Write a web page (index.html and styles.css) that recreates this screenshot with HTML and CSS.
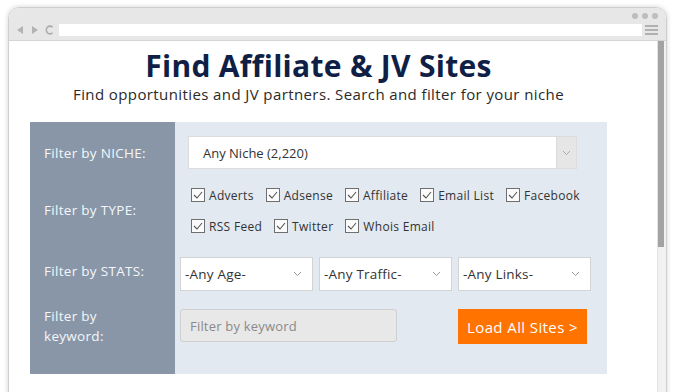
FILE: index.html
```html
<!DOCTYPE html>
<html lang="en">
<head>
    <meta charset="UTF-8">
    <meta name="viewport" content="width=device-width, initial-scale=1.0">
    <title>Find Affiliate &amp; JV Sites</title>
    <link rel="stylesheet" href="styles.css">
</head>
<body>
    <div class="browser">
        <div class="toolbar">
            <div class="dots"><span></span><span></span><span></span></div>
            <div class="nav">
                <svg class="nav-icon" width="7" height="8" viewBox="0 0 7 8"><path d="M6 0 L0 4 L6 8 Z" fill="#b3b3b3"/></svg>
                <svg class="nav-icon" width="7" height="8" viewBox="0 0 7 8"><path d="M1 0 L7 4 L1 8 Z" fill="#b3b3b3"/></svg>
                <svg class="nav-icon" width="9" height="10" viewBox="0 0 9 10"><path d="M7.6 2.2 A3.7 3.9 0 1 0 7.6 7.8" fill="none" stroke="#aaa" stroke-width="1.6"/></svg>
                <div class="address"></div>
                <div class="menu"><span></span><span></span><span></span></div>
            </div>
        </div>
        <div class="viewport">
            <div class="page">
                <h1>Find Affiliate &amp; JV Sites</h1>
                <p class="sub">Find opportunities and JV partners. Search and filter for your niche</p>

                <div class="filter">
                    <div class="label row-niche">Filter by NICHE:</div>
                    <div class="field row-niche">
                        <div class="select niche">
                            <span>Any Niche (2,220)</span>
                            <span class="niche-arrow">
                                <svg width="9" height="6" viewBox="0 0 9 6"><path d="M1 1 L4.5 4.5 L8 1" fill="none" stroke="#aaa" stroke-width="1"/></svg>
                            </span>
                        </div>
                    </div>

                    <div class="label row-type">Filter by TYPE:</div>
                    <div class="field row-type">
                        <div class="checks">
                            <label class="check"><span class="box"><svg width="10" height="8" viewBox="0 0 10 8"><path d="M1 4 L4 7 L9 1" fill="none" stroke="#555" stroke-width="1.1"/></svg></span>Adverts</label>
                            <label class="check"><span class="box"><svg width="10" height="8" viewBox="0 0 10 8"><path d="M1 4 L4 7 L9 1" fill="none" stroke="#555" stroke-width="1.1"/></svg></span>Adsense</label>
                            <label class="check"><span class="box"><svg width="10" height="8" viewBox="0 0 10 8"><path d="M1 4 L4 7 L9 1" fill="none" stroke="#555" stroke-width="1.1"/></svg></span>Affiliate</label>
                            <label class="check"><span class="box"><svg width="10" height="8" viewBox="0 0 10 8"><path d="M1 4 L4 7 L9 1" fill="none" stroke="#555" stroke-width="1.1"/></svg></span>Email List</label>
                            <label class="check"><span class="box"><svg width="10" height="8" viewBox="0 0 10 8"><path d="M1 4 L4 7 L9 1" fill="none" stroke="#555" stroke-width="1.1"/></svg></span>Facebook</label>
                            <label class="check"><span class="box"><svg width="10" height="8" viewBox="0 0 10 8"><path d="M1 4 L4 7 L9 1" fill="none" stroke="#555" stroke-width="1.1"/></svg></span>RSS Feed</label>
                            <label class="check"><span class="box"><svg width="10" height="8" viewBox="0 0 10 8"><path d="M1 4 L4 7 L9 1" fill="none" stroke="#555" stroke-width="1.1"/></svg></span>Twitter</label>
                            <label class="check"><span class="box"><svg width="10" height="8" viewBox="0 0 10 8"><path d="M1 4 L4 7 L9 1" fill="none" stroke="#555" stroke-width="1.1"/></svg></span>Whois Email</label>
                        </div>
                    </div>

                    <div class="label row-stats">Filter by STATS:</div>
                    <div class="field row-stats">
                        <div class="stats">
                            <div class="select stat"><span>-Any Age-</span><svg width="9" height="6" viewBox="0 0 9 6"><path d="M1 1 L4.5 4.5 L8 1" fill="none" stroke="#999" stroke-width="1"/></svg></div>
                            <div class="select stat"><span>-Any Traffic-</span><svg width="9" height="6" viewBox="0 0 9 6"><path d="M1 1 L4.5 4.5 L8 1" fill="none" stroke="#999" stroke-width="1"/></svg></div>
                            <div class="select stat"><span>-Any Links-</span><svg width="9" height="6" viewBox="0 0 9 6"><path d="M1 1 L4.5 4.5 L8 1" fill="none" stroke="#999" stroke-width="1"/></svg></div>
                        </div>
                    </div>

                    <div class="label row-keyword">Filter by<br>keyword:</div>
                    <div class="field row-keyword">
                        <div class="keyword-row">
                            <input type="text" class="keyword" placeholder="Filter by keyword">
                            <button type="button" class="load">Load All Sites &gt;</button>
                        </div>
                    </div>
                </div>
            </div>
            <div class="scrollbar"><div class="thumb"></div></div>
        </div>
    </div>
</body>
</html>
```

FILE: styles.css
```css
body {
    margin: 0;
    background-color: #ffffff;
    font-family: "Open Sans", Arial, sans-serif;
    overflow: hidden;
}
.browser {
    margin: 7px 0 0 8px;
    width: 657px;
    height: 400px;
    border: 1px solid #cfcfcf;
    border-radius: 11px 11px 0 0;
    box-shadow: 0 0 5px rgba(0, 0, 0, 0.18);
    overflow: hidden;
    display: flex;
    flex-direction: column;
}
.toolbar {
    background-color: #e7e7e7;
    border-bottom: 1px solid #d4d4d4;
    box-sizing: border-box;
    height: 33px;
    padding: 5px 8px 0 8px;
}
.dots {
    display: flex;
    justify-content: flex-end;
    gap: 4px;
    height: 6px;
}
.dots span {
    width: 6px;
    height: 6px;
    border-radius: 50%;
    background-color: #bdbdbd;
}
.nav {
    display: flex;
    align-items: center;
    margin-top: 5px;
    height: 12px;
}
.nav-icon {
    margin-right: 7px;
}
.nav-icon:nth-child(3) {
    margin-right: 5px;
}
.address {
    flex: 1;
    height: 12px;
    background-color: #ffffff;
}
.menu {
    width: 13px;
    margin-left: 3px;
    display: flex;
    flex-direction: column;
    gap: 2px;
}
.menu span {
    height: 2px;
    background-color: #b0b0b0;
}
.viewport {
    flex: 1;
    display: flex;
    background-color: #ffffff;
}
.page {
    flex: 1;
    padding: 7px 0 0 21px;
}
h1 {
    width: 577px;
    margin: 0;
    text-align: center;
    font-size: 30px;
    line-height: 36px;
    font-weight: 700;
    letter-spacing: 0.3px;
    color: #0f1f45;
}
.sub {
    width: 577px;
    margin: 0;
    text-align: center;
    font-size: 15px;
    line-height: 20px;
    letter-spacing: 0.4px;
    color: #2a2a2a;
}
.scrollbar {
    width: 8px;
    background-color: #f1f1f1;
    border-left: 1px solid #e2e2e2;
}
.thumb {
    width: 6px;
    height: 206px;
    background-color: #a3a3a3;
}
.filter {
    width: 577px;
    margin-top: 18px;
    display: grid;
    grid-template-columns: 145px 1fr;
    grid-template-rows: 60px 58px 64px 70px;
    background-color: #e2e9f1;
}
.label {
    background-color: #8896a8;
    color: #f4f6f9;
    font-size: 13.5px;
    line-height: 20px;
    letter-spacing: 0.3px;
    padding-left: 14px;
}
.label.row-niche { padding-top: 21px; }
.label.row-type { padding-top: 18px; }
.label.row-stats { padding-top: 21px; }
.label.row-keyword { padding-top: 2px; }
.field.row-niche { padding: 14px 0 0 13px; }
.field.row-type { padding: 3px 0 0 16px; }
.field.row-stats { padding: 17px 0 0 5px; }
.field.row-keyword { padding: 5px 0 0 5px; }
.select {
    background-color: #ffffff;
    border: 1px solid #d3d3d3;
    box-sizing: border-box;
    display: flex;
    align-items: center;
    justify-content: space-between;
    font-size: 13px;
    color: #333;
}
.niche {
    width: 389px;
    height: 33px;
    padding-left: 14px;
    border-color: #dcdcdc;
}
.niche-arrow {
    width: 19px;
    height: 100%;
    background-color: #e6e6e6;
    border-left: 1px solid #dadada;
    display: flex;
    align-items: center;
    justify-content: center;
}
.checks {
    display: flex;
    flex-wrap: wrap;
    column-gap: 12px;
    row-gap: 11px;
    width: 400px;
}
.check {
    display: flex;
    align-items: center;
    height: 20px;
    font-size: 12px;
    letter-spacing: 0.3px;
    color: #333;
}
.box {
    width: 14px;
    height: 14px;
    box-sizing: border-box;
    border: 1px solid #6f6f6f;
    background-color: #fbfbfb;
    margin-right: 4px;
    display: flex;
    align-items: center;
    justify-content: center;
}
.stats {
    display: flex;
    gap: 6px;
}
.stat {
    width: 133px;
    height: 34px;
    padding: 0 10px 0 4px;
    font-size: 13.5px;
    letter-spacing: 0.2px;
}
.keyword-row {
    display: flex;
    align-items: flex-start;
}
.keyword {
    width: 217px;
    height: 33px;
    box-sizing: border-box;
    border: 1px solid #cfcfcf;
    border-radius: 3px;
    background-color: #e8e8e8;
    padding: 0 9px;
    font-family: "Open Sans", Arial, sans-serif;
    font-size: 13px;
    letter-spacing: 0.2px;
    color: #333;
}
.keyword::placeholder {
    color: #8a8a8a;
}
.load {
    margin-left: 61px;
    width: 129px;
    height: 35px;
    border: none;
    background-color: #ff7300;
    color: #ffffff;
    font-family: "Open Sans", Arial, sans-serif;
    font-size: 15px;
    letter-spacing: 0.4px;
    padding: 0;
}
```
